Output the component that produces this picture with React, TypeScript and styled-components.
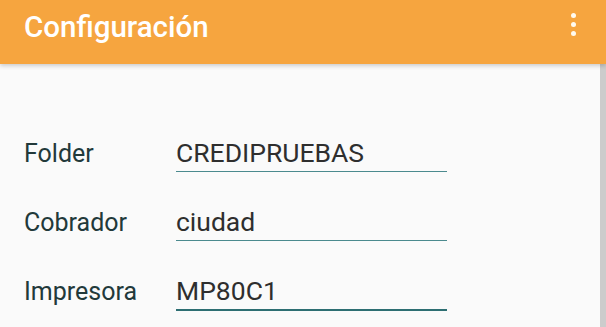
import React from "react";
import styled, { createGlobalStyle } from "styled-components";

const GlobalStyle = createGlobalStyle`
  html, body {
    margin: 0;
    padding: 0;
    background: #fafafa;
  }
  body {
    font-family: Roboto, "Liberation Sans", sans-serif;
  }
`;

interface FIELD {
  label: string;
  value: string;
  focused?: boolean;
}

const fields: FIELD[] = [
  { label: "Folder", value: "CREDIPRUEBAS" },
  { label: "Cobrador", value: "ciudad" },
  { label: "Impresora", value: "MP80C1", focused: true },
];

const App: React.FC = () => {
  return (
    <Screen>
      <GlobalStyle />
      <Toolbar>
        <Title>Configuración</Title>
        <MenuButton aria-label="Más opciones">
          <Dot />
          <Dot />
          <Dot />
        </MenuButton>
      </Toolbar>
      <Body>
        <Form>
          {fields.map((f) => (
            <Row key={f.label}>
              <Label>{f.label}</Label>
              <Field $focused={f.focused}>{f.value}</Field>
            </Row>
          ))}
        </Form>
        <ScrollTrack />
      </Body>
    </Screen>
  );
};

export default App;

const Screen = styled.div`
  width: 606px;
  height: 327px;
  overflow: hidden;
  display: flex;
  flex-direction: column;
  background: #fafafa;
`;

const Toolbar = styled.header`
  position: relative;
  z-index: 1;
  height: 64px;
  flex-shrink: 0;
  display: flex;
  align-items: center;
  justify-content: space-between;
  padding: 0 24px;
  background: #f6a53f;
  box-shadow: 0 2px 4px rgba(0, 0, 0, 0.18);
`;

const Title = styled.h1`
  margin: 0 0 11px 0;
  color: #ffffff;
  font-family: Roboto, "Liberation Sans", sans-serif;
  font-weight: 500;
  font-size: 29.5px;
  line-height: 34px;
`;

const MenuButton = styled.div`
  display: flex;
  flex-direction: column;
  align-items: center;
  gap: 4px;
  margin: 0 6px 16px 0;
`;

const Dot = styled.span`
  width: 5px;
  height: 5px;
  border-radius: 50%;
  background: #fffaf0;
`;

const Body = styled.main`
  flex: 1;
  display: flex;
`;

const Form = styled.div`
  flex: 1;
  display: flex;
  flex-direction: column;
  gap: 37px;
  padding: 76px 0 0 24px;
`;

const Row = styled.div`
  display: grid;
  grid-template-columns: 152px 271px;
  align-items: baseline;
`;

const Label = styled.span`
  color: #22393a;
  font-size: 25px;
  line-height: 26px;
`;

const Field = styled.div<{ $focused?: boolean }>`
  color: #2e2e2e;
  font-size: 26.5px;
  line-height: 26px;
  padding-bottom: 5px;
  border-bottom: ${(p) => (p.$focused ? "2px solid #2d6e72" : "1px solid #4b8a8e")};
`;

const ScrollTrack = styled.div`
  width: 6px;
  background: #cccccc;
`;
